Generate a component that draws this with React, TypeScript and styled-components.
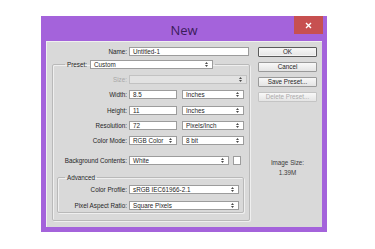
import React from 'react';
import styled, { createGlobalStyle } from 'styled-components';

const GlobalStyle = createGlobalStyle`
  html, body {
    margin: 0;
    padding: 0;
    background: #ffffff;
  }
  body {
    font-family: "Liberation Sans", Arial, sans-serif;
  }
`;

const Page = styled.div`
  width: 375px;
  height: 249px;
  box-sizing: border-box;
  padding: 16px 0 0 41px;
`;

const Window = styled.div`
  width: 286px;
  box-sizing: border-box;
  padding: 0 5px 5px;
  background: #a463db;
`;

const TitleBar = styled.div`
  height: 25px;
  display: grid;
  grid-template-columns: 1fr auto 1fr;
`;

const Title = styled.div`
  grid-column: 2;
  align-self: center;
  padding-top: 3px;
  font-family: "Open Sans", "Noto Sans", sans-serif;
  font-size: 13px;
  line-height: 14px;
  color: #3b1c5a;
`;

const CloseButton = styled.div`
  grid-column: 3;
  justify-self: end;
  width: 29px;
  height: 18px;
  margin-right: -1px;
  background: #c75050;
  display: flex;
  align-items: center;
  justify-content: center;
`;

const Panel = styled.div`
  height: 186px;
  box-sizing: border-box;
  display: flex;
  gap: 8px;
  padding: 6px 5px 0 6px;
  background: #d9d9d9;
  box-shadow: inset 1px 1px 0 #f0f0f0;
`;

const LeftColumn = styled.div`
  width: 198px;
  display: flex;
  flex-direction: column;
`;

const RightColumn = styled.div`
  width: 59px;
  display: flex;
  flex-direction: column;
  gap: 5px;
`;

const Row = styled.div<{ $label: number; $mt?: number }>`
  display: grid;
  grid-template-columns: ${p => p.$label}px auto;
  column-gap: 2px;
  align-items: center;
  margin-top: ${p => p.$mt ?? 0}px;
`;

const Label = styled.span<{ $disabled?: boolean }>`
  text-align: right;
  font-size: 6.3px;
  line-height: 9px;
  color: ${p => (p.$disabled ? '#a8a8a8' : '#262626')};
  white-space: nowrap;
`;

const Controls = styled.div<{ $gap?: number }>`
  display: flex;
  align-items: center;
  gap: ${p => p.$gap ?? 5}px;
`;

const Field = styled.div<{ $w: number; $disabled?: boolean }>`
  width: ${p => p.$w}px;
  height: 9px;
  box-sizing: border-box;
  display: flex;
  align-items: center;
  justify-content: space-between;
  padding: 0 4px 0 3px;
  border: 1px solid ${p => (p.$disabled ? '#c2c2c2' : '#9c9c9c')};
  background: ${p => (p.$disabled ? '#e2e2e2' : '#ffffff')};
  font-size: 6.3px;
  line-height: 7px;
  color: #262626;
  white-space: nowrap;
`;

const Swatch = styled.div`
  width: 8px;
  height: 9px;
  box-sizing: border-box;
  border: 1px solid #9c9c9c;
  background: #ffffff;
`;

const Group = styled.fieldset<{ $mt: number; $mx?: number; $pb: number }>`
  margin: ${p => p.$mt}px ${p => p.$mx ?? 0}px 0 ${p => (p.$mx ? p.$mx - 1 : 0)}px;
  padding: 0 0 ${p => p.$pb}px;
  border: 1px solid #b9b9b9;
  border-radius: 2px;
  box-shadow: inset 1px 1px 0 #efefef, 1px 1px 0 #efefef;
  min-width: 0;
`;

const Legend = styled.legend<{ $ml: number }>`
  margin-left: ${p => p.$ml}px;
  padding: 0 2px;
  display: flex;
  align-items: center;
  gap: 3px;
  font-size: 6.3px;
  line-height: 9px;
  color: #262626;
`;

const Button = styled.div<{ $primary?: boolean; $disabled?: boolean }>`
  height: 10px;
  box-sizing: border-box;
  display: flex;
  align-items: center;
  justify-content: center;
  border: 1px solid ${p => (p.$primary ? '#5a5a5a' : p.$disabled ? '#c4c4c4' : '#9a9a9a')};
  border-radius: 1px;
  background: linear-gradient(#f8f8f8, #e4e4e4);
  box-shadow: ${p => (p.$primary ? 'inset 0 0 0 1px #f4f4f4' : 'none')};
  font-size: 6.3px;
  line-height: 8px;
  color: ${p => (p.$disabled ? '#ababab' : '#262626')};
`;

const ImageSize = styled.div`
  margin-top: 51px;
  text-align: center;
  font-size: 6.3px;
  line-height: 10px;
  color: #3c3c3c;
`;

const Arrows = () => (
  <svg width="3" height="5" viewBox="0 0 3 5">
    <path d="M0 2 L1.5 0 L3 2 Z M0 3 L1.5 5 L3 3 Z" fill="#4a4a4a" />
  </svg>
);

const Select: React.FC<{ w: number; value?: string; disabled?: boolean }> = ({ w, value, disabled }) => (
  <Field $w={w} $disabled={disabled}>
    <span>{value}</span>
    {disabled ? <span /> : null}
    <Arrows />
  </Field>
);

const App: React.FC = () => {
  return (
    <Page>
      <GlobalStyle />
      <Window>
        <TitleBar>
          <Title>New</Title>
          <CloseButton>
            <svg width="7" height="7" viewBox="0 0 7 7">
              <path d="M1 1 L6 6 M6 1 L1 6" stroke="#ffffff" strokeWidth="1.4" />
            </svg>
          </CloseButton>
        </TitleBar>
        <Panel>
          <LeftColumn>
            <Row $label={75}>
              <Label>Name:</Label>
              <Field $w={120}>Untitled-1</Field>
            </Row>

            <Group $mt={4} $pb={7}>
              <Legend $ml={12}>
                <span>Preset:</span>
                <Select w={123} value="Custom" />
              </Legend>

              <Row $label={74} $mt={6}>
                <Label $disabled>Size:</Label>
                <Select w={118} disabled />
              </Row>
              <Row $label={74} $mt={6}>
                <Label>Width:</Label>
                <Controls>
                  <Field $w={48}>8.5</Field>
                  <Select w={62} value="Inches" />
                </Controls>
              </Row>
              <Row $label={74} $mt={7}>
                <Label>Height:</Label>
                <Controls>
                  <Field $w={48}>11</Field>
                  <Select w={62} value="Inches" />
                </Controls>
              </Row>
              <Row $label={74} $mt={6}>
                <Label>Resolution:</Label>
                <Controls>
                  <Field $w={48}>72</Field>
                  <Select w={62} value="Pixels/Inch" />
                </Controls>
              </Row>
              <Row $label={74} $mt={6}>
                <Label>Color Mode:</Label>
                <Controls>
                  <Select w={48} value="RGB Color" />
                  <Select w={62} value="8 bit" />
                </Controls>
              </Row>
              <Row $label={74} $mt={11}>
                <Label>Background Contents:</Label>
                <Controls $gap={4}>
                  <Select w={100} value="White" />
                  <Swatch />
                </Controls>
              </Row>

              <Group $mt={8} $mx={5} $pb={2}>
                <Legend $ml={7}>Advanced</Legend>
                <Row $label={69} $mt={3}>
                  <Label>Color Profile:</Label>
                  <Select w={110} value="sRGB IEC61966-2.1" />
                </Row>
                <Row $label={69} $mt={7}>
                  <Label>Pixel Aspect Ratio:</Label>
                  <Select w={110} value="Square Pixels" />
                </Row>
              </Group>
            </Group>
          </LeftColumn>

          <RightColumn>
            <Button $primary>OK</Button>
            <Button>Cancel</Button>
            <Button>Save Preset...</Button>
            <Button $disabled>Delete Preset...</Button>
            <ImageSize>
              Image Size:
              <br />
              1.39M
            </ImageSize>
          </RightColumn>
        </Panel>
      </Window>
    </Page>
  );
};

export default App;
